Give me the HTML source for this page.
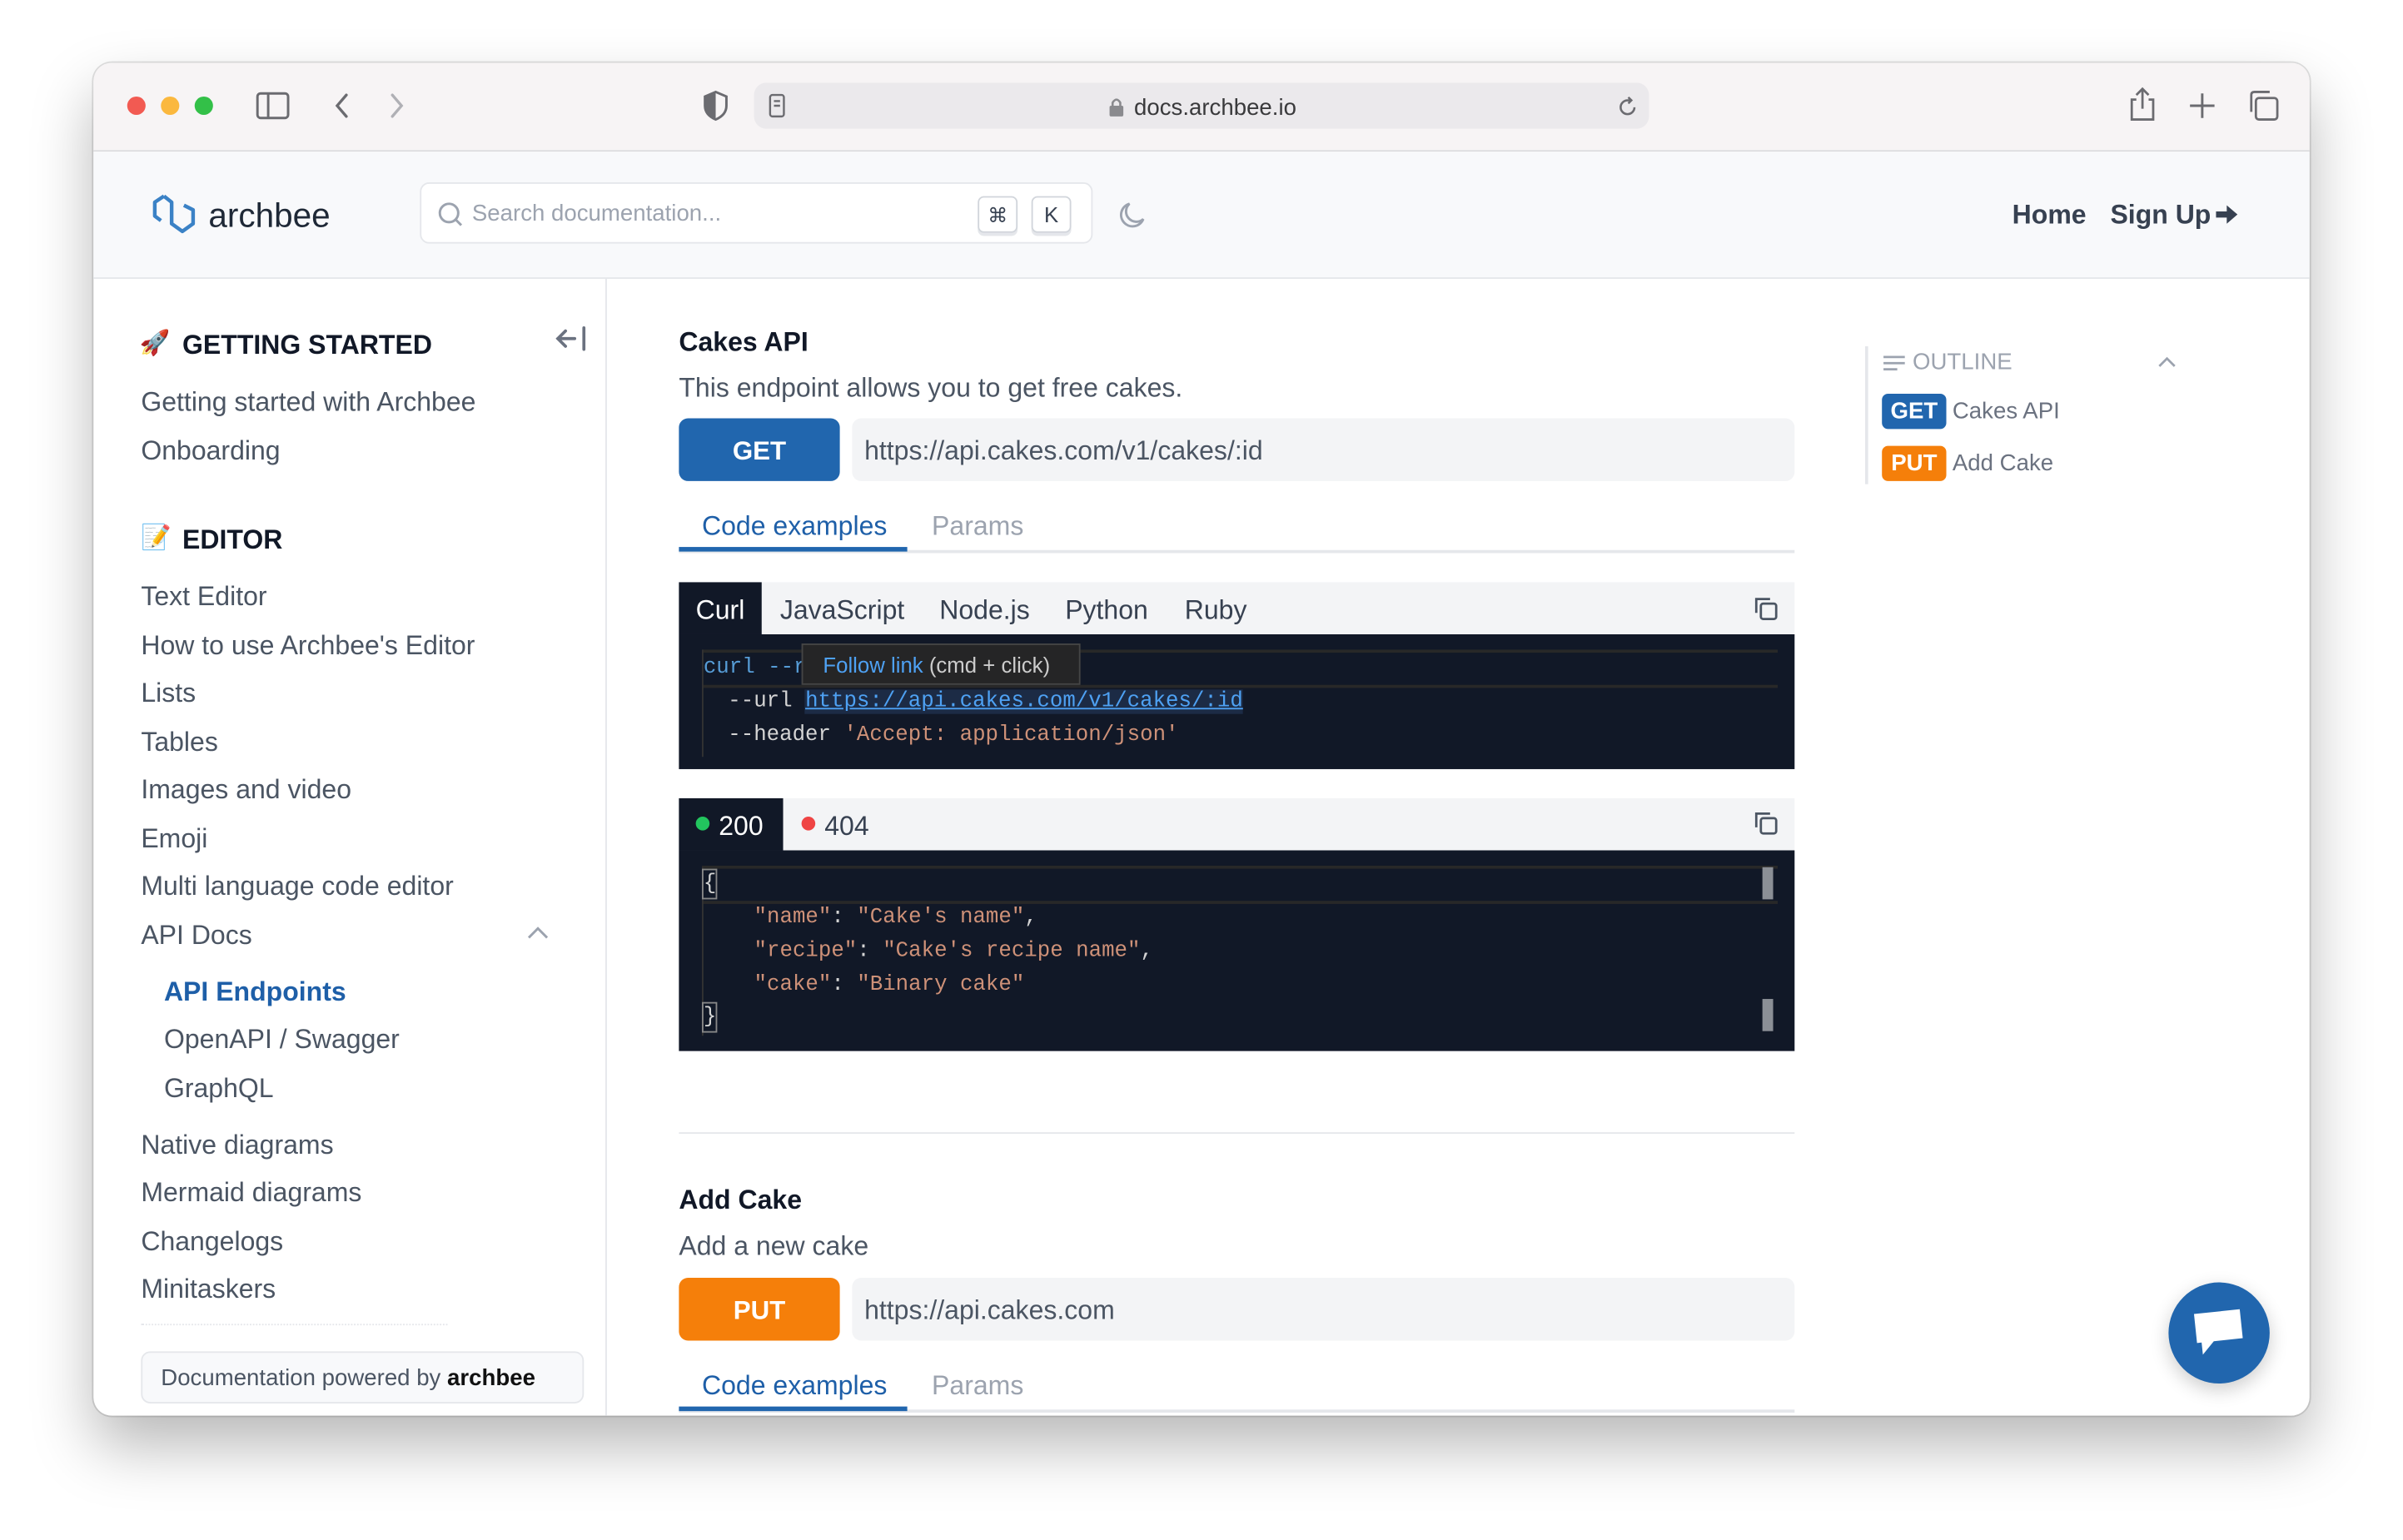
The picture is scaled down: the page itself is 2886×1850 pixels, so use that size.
<!DOCTYPE html>
<html><head><meta charset="utf-8">
<style>
html,body{margin:0;padding:0;background:#fff;width:2886px;height:1850px;overflow:hidden}
#s{position:absolute;left:0;top:0;width:1568px;height:1005px;transform:scale(1.84056);transform-origin:0 0;font-family:"Liberation Sans",sans-serif;color:#4b5563}
.a{position:absolute;white-space:nowrap}
#win{position:absolute;left:61px;top:41px;width:1446px;height:883px;border-radius:12px;background:#fff;overflow:hidden;box-shadow:0 20px 40px rgba(0,0,0,.28),0 0 0 1px rgba(0,0,0,.12)}
.t{font-size:17.4px;line-height:22px}
.mono{font-family:"Liberation Mono",monospace;font-size:14px;line-height:18px}
.dot{position:absolute;width:12px;height:12px;border-radius:6px;top:63px}
</style></head><body>
<div id="s">
<div id="win"></div>
<div class="a" style="left:61px;top:41px;width:1446px;height:57px;background:#f7f4f5;border-radius:12px 12px 0 0;border-bottom:1px solid #d9d9dc"></div>
<div class="dot" style="left:83px;background:#f25a52"></div>
<div class="dot" style="left:105px;background:#fbb83e"></div>
<div class="dot" style="left:127px;background:#33c048"></div>
<svg class="a" style="left:166px;top:59px" width="24" height="20" fill="none" stroke="#6b6b70" stroke-width="1.6"><rect x="2" y="2" width="20" height="16" rx="2"/><line x1="9" y1="2" x2="9" y2="18"/></svg>
<svg class="a" style="left:213px;top:59px" width="60" height="20" fill="none" stroke-width="1.8" stroke-linecap="round"><path d="M13 3 L7 10 L13 17" stroke="#6b6b70"/><path d="M43 3 L49 10 L43 17" stroke="#b0b0b5"/></svg>
<svg class="a" style="left:458px;top:59px" width="18" height="20"><path d="M9 1 L16 4 L16 10 Q16 16 9 19 Q2 16 2 10 L2 4 Z" fill="none" stroke="#6b6b70" stroke-width="1.6"/><path d="M9 1 L9 19 Q2 16 2 10 L2 4 Z" fill="#6b6b70"/></svg>
<div class="a" style="left:492px;top:54px;width:584px;height:30px;background:#ebe9ec;border-radius:8px"></div>
<svg class="a" style="left:501px;top:61px" width="12" height="16" fill="none" stroke="#6b6b70" stroke-width="1.3"><rect x="1.5" y="1" width="9" height="14" rx="1.5"/><line x1="4" y1="5" x2="8" y2="5"/><line x1="4" y1="8" x2="8" y2="8"/></svg>
<svg class="a" style="left:723px;top:63px" width="11" height="14"><rect x="1" y="6" width="9" height="7" rx="1" fill="#8a8a8e"/><path d="M3 6 V4 Q5.5 0 8 4 V6" fill="none" stroke="#8a8a8e" stroke-width="1.4"/></svg>
<div class="a" style="left:740px;top:62px;font-size:15px;color:#3a3a3c">docs.archbee.io</div>
<svg class="a" style="left:1054px;top:62px" width="16" height="16" fill="none" stroke="#6b6b70" stroke-width="1.4"><path d="M12.5 8 A4.5 4.5 0 1 1 8 3.5 L10 3.5"/><path d="M8.5 1.5 L10.5 3.5 L8.5 5.5"/></svg>
<svg class="a" style="left:1388px;top:56px" width="20" height="24" fill="none" stroke="#6b6b70" stroke-width="1.5"><path d="M6 9 H3 V22 H17 V9 H14"/><path d="M10 15 V2 M6 6 L10 2 L14 6"/></svg>
<svg class="a" style="left:1427px;top:59px" width="20" height="20" stroke="#6b6b70" stroke-width="1.6"><path d="M10 2 V18 M2 10 H18"/></svg>
<svg class="a" style="left:1466px;top:58px" width="22" height="22" fill="none" stroke="#6b6b70" stroke-width="1.5"><rect x="6" y="6" width="14" height="14" rx="2"/><path d="M3 15 V4 Q3 2 5 2 H15"/></svg>
<div class="a" style="left:61px;top:99px;width:1446px;height:82px;background:#f8f9fb;border-bottom:1px solid #e5e7eb"></div>
<svg class="a" style="left:99px;top:126px" width="32" height="28" fill="none" stroke="#3b82c6" stroke-width="2.4" stroke-linejoin="round"><path d="M8 2 L2 6 V15 L6 18"/><path d="M8 2 L13 6 V20 L20 25 L27 20 V11 L21 8"/></svg>
<div class="a" style="left:136px;top:128px;font-size:22px;color:#1f2937">archbee</div>
<div class="a" style="left:274px;top:119px;width:439px;height:40px;background:#fff;border:1px solid #e5e7eb;border-radius:6px;box-sizing:border-box"></div>
<svg class="a" style="left:285px;top:131px" width="18" height="18" fill="none" stroke="#9ca3af" stroke-width="1.6"><circle cx="8" cy="8" r="6"/><path d="M12.5 12.5 L16 16"/></svg>
<div class="a" style="left:308px;top:131px;font-size:15px;color:#9ca3af">Search documentation...</div>
<div class="a" style="left:638px;top:128px;width:26px;height:24px;border:1px solid #d1d5db;border-radius:4px;box-shadow:0 2px 0 #e5e7eb;font-size:13px;text-align:center;line-height:24px;color:#374151;box-sizing:border-box">⌘</div>
<div class="a" style="left:673px;top:128px;width:26px;height:24px;border:1px solid #d1d5db;border-radius:4px;box-shadow:0 2px 0 #e5e7eb;font-size:14px;text-align:center;line-height:22px;color:#374151;box-sizing:border-box">K</div>
<svg class="a" style="left:730px;top:131px" width="18" height="18" fill="none" stroke="#9ca3af" stroke-width="1.6"><path d="M7 2 A7.5 7.5 0 1 0 16 12 A6 6 0 0 1 7 2 Z"/></svg>
<div class="a" style="left:1313px;top:130px;font-size:17.4px;font-weight:bold;color:#374151">Home</div>
<div class="a" style="left:1377px;top:130px;font-size:17.4px;font-weight:bold;color:#374151">Sign Up</div>
<svg class="a" style="left:1445px;top:133px" width="16" height="14"><path d="M1 5 H8 V1 L15 7 L8 13 V9 H1 Z" fill="#374151"/></svg>
<div class="a" style="left:395px;top:182px;width:1px;height:742px;background:#e5e7eb"></div>
<div class="a t" style="left:91px;top:214px;font-size:16px">🚀</div>
<div class="a t" style="left:119px;top:214px;font-weight:bold;color:#111827">GETTING STARTED</div>
<svg class="a" style="left:362px;top:212px" width="22" height="18" fill="none" stroke="#6b7280" stroke-width="2" stroke-linecap="round"><path d="M2 9 H13 M7 4 L2 9 L7 14 M19 2 V16"/></svg>
<div class="a t" style="left:92px;top:251px">Getting started with Archbee</div>
<div class="a t" style="left:92px;top:283px">Onboarding</div>
<div class="a t" style="left:92px;top:341px;font-size:16px">📝</div>
<div class="a t" style="left:119px;top:341px;font-weight:bold;color:#111827">EDITOR</div>
<div class="a t" style="left:92px;top:378px">Text Editor</div>
<div class="a t" style="left:92px;top:410px">How to use Archbee's Editor</div>
<div class="a t" style="left:92px;top:441px">Lists</div>
<div class="a t" style="left:92px;top:473px">Tables</div>
<div class="a t" style="left:92px;top:504px">Images and video</div>
<div class="a t" style="left:92px;top:536px">Emoji</div>
<div class="a t" style="left:92px;top:567px">Multi language code editor</div>
<div class="a t" style="left:92px;top:599px">API Docs</div>
<svg class="a" style="left:343px;top:604px" width="16" height="10" fill="none" stroke="#9ca3af" stroke-width="1.6"><path d="M2 8 L8 2 L14 8"/></svg>
<div class="a t" style="left:107px;top:636px;color:#1e5fa8;font-weight:bold">API Endpoints</div>
<div class="a t" style="left:107px;top:667px">OpenAPI / Swagger</div>
<div class="a t" style="left:107px;top:699px">GraphQL</div>
<div class="a t" style="left:92px;top:736px">Native diagrams</div>
<div class="a t" style="left:92px;top:767px">Mermaid diagrams</div>
<div class="a t" style="left:92px;top:799px">Changelogs</div>
<div class="a t" style="left:92px;top:830px">Minitaskers</div>
<div class="a" style="left:92px;top:864px;width:200px;height:1px;border-top:1px dotted #e5e7eb"></div>
<div class="a" style="left:92px;top:882px;width:289px;height:34px;background:#f8f9fb;border:1px solid #e5e7eb;border-radius:6px;box-sizing:border-box;font-size:15px;line-height:34px;padding-left:12px;color:#4b5563">Documentation powered by <b style="color:#111">archbee</b></div>
<div class="a t" style="left:443px;top:212px;font-weight:bold;color:#111827">Cakes API</div>
<div class="a t" style="left:443px;top:242px">This endpoint allows you to get free cakes.</div>
<div class="a" style="left:443px;top:273px;width:105px;height:41px;background:#2166ae;border-radius:6px;color:#fff;font-size:17px;font-weight:bold;text-align:center;line-height:43px">GET</div>
<div class="a" style="left:556px;top:273px;width:615px;height:41px;background:#f3f4f6;border-radius:6px;font-size:17.4px;line-height:43px;padding-left:8px;box-sizing:border-box">https://api.cakes.com/v1/cakes/:id</div>
<div class="a t" style="left:458px;top:332px;color:#1e5fa8">Code examples</div>
<div class="a t" style="left:608px;top:332px;color:#9ca3af">Params</div>
<div class="a" style="left:443px;top:359px;width:728px;height:2px;background:#e5e7eb"></div>
<div class="a" style="left:443px;top:357px;width:149px;height:3px;background:#2166ae"></div>
<div class="a" style="left:443px;top:380px;width:728px;height:34px;background:#f3f4f6"></div>
<div class="a" style="left:443px;top:380px;width:54px;height:34px;background:#111827"></div>
<div class="a t" style="left:454px;top:387px;color:#fff">Curl</div>
<div class="a t" style="left:509px;top:387px;color:#374151">JavaScript</div>
<div class="a t" style="left:613px;top:387px;color:#374151">Node.js</div>
<div class="a t" style="left:695px;top:387px;color:#374151">Python</div>
<div class="a t" style="left:773px;top:387px;color:#374151">Ruby</div>
<svg class="a" style="left:1143px;top:388px" width="18" height="18" fill="none" stroke="#4b5563" stroke-width="1.5"><rect x="6" y="6" width="10" height="10" rx="1.5"/><path d="M3 12 V3 H12"/></svg>
<div class="a" style="left:443px;top:414px;width:728px;height:88px;background:#111827"></div>
<div class="a" style="left:458px;top:424px;width:702px;height:21px;border-top:2px solid #282828;border-bottom:2px solid #282828"></div>
<div class="a" style="left:458px;top:424px;width:1px;height:70px;background:#333"></div>
<div class="a mono" style="left:459px;top:427px;color:#569cd6">curl --r</div>
<div class="a mono" style="left:475px;top:449px;color:#d4d4d4">--url <span style="color:#4ea1f3;text-decoration:underline;background:#1c2b45">https://api.cakes.com/v1/cakes/:id</span></div>
<div class="a mono" style="left:475px;top:471px;color:#d4d4d4">--header <span style="color:#ce9178">'Accept: application/json'</span></div>
<div class="a" style="left:523px;top:420px;width:182px;height:27px;background:#252526;border:1px solid #454545;box-sizing:border-box;font-size:14px;line-height:26px;padding-left:13px;color:#ccc"><span style="color:#4ea1f3">Follow link</span> (cmd + click)</div>
<div class="a" style="left:443px;top:521px;width:728px;height:34px;background:#f3f4f6"></div>
<div class="a" style="left:443px;top:521px;width:68px;height:34px;background:#111827"></div>
<div class="a" style="left:454px;top:533px;width:9px;height:9px;border-radius:5px;background:#22c55e"></div>
<div class="a t" style="left:469px;top:528px;color:#fff">200</div>
<div class="a" style="left:523px;top:533px;width:9px;height:9px;border-radius:5px;background:#ef4444"></div>
<div class="a t" style="left:538px;top:528px;color:#374151">404</div>
<svg class="a" style="left:1143px;top:528px" width="18" height="18" fill="none" stroke="#4b5563" stroke-width="1.5"><rect x="6" y="6" width="10" height="10" rx="1.5"/><path d="M3 12 V3 H12"/></svg>
<div class="a" style="left:443px;top:555px;width:728px;height:131px;background:#111827"></div>
<div class="a" style="left:458px;top:565px;width:702px;height:21px;border-top:2px solid #282828;border-bottom:2px solid #282828"></div>
<div class="a" style="left:458px;top:566px;width:1px;height:110px;background:#333"></div>
<div class="a" style="left:1150px;top:566px;width:7px;height:21px;background:#8b8f96"></div>
<div class="a" style="left:1150px;top:652px;width:7px;height:21px;background:#8b8f96"></div>
<div class="a mono" style="left:459px;top:568px;color:#d4d4d4;outline:1px solid #888">{</div>
<div class="a mono" style="left:492px;top:590px;color:#ce9178">"name"<span style="color:#d4d4d4">:</span> "Cake's name"<span style="color:#d4d4d4">,</span></div>
<div class="a mono" style="left:492px;top:612px;color:#ce9178">"recipe"<span style="color:#d4d4d4">:</span> "Cake's recipe name"<span style="color:#d4d4d4">,</span></div>
<div class="a mono" style="left:492px;top:634px;color:#ce9178">"cake"<span style="color:#d4d4d4">:</span> "Binary cake"</div>
<div class="a mono" style="left:459px;top:655px;color:#d4d4d4;outline:1px solid #888">}</div>
<div class="a" style="left:443px;top:739px;width:728px;height:1px;background:#e5e7eb"></div>
<div class="a t" style="left:443px;top:772px;font-weight:bold;color:#111827">Add Cake</div>
<div class="a t" style="left:443px;top:802px">Add a new cake</div>
<div class="a" style="left:443px;top:834px;width:105px;height:41px;background:#f57f0a;border-radius:6px;color:#fff;font-size:17px;font-weight:bold;text-align:center;line-height:43px">PUT</div>
<div class="a" style="left:556px;top:834px;width:615px;height:41px;background:#f3f4f6;border-radius:6px;font-size:17.4px;line-height:43px;padding-left:8px;box-sizing:border-box">https://api.cakes.com</div>
<div class="a t" style="left:458px;top:893px;color:#1e5fa8">Code examples</div>
<div class="a t" style="left:608px;top:893px;color:#9ca3af">Params</div>
<div class="a" style="left:443px;top:920px;width:728px;height:2px;background:#e5e7eb"></div>
<div class="a" style="left:443px;top:918px;width:149px;height:3px;background:#2166ae"></div>
<div class="a" style="left:1217px;top:226px;width:2px;height:90px;background:#e5e7eb"></div>
<svg class="a" style="left:1229px;top:231px" width="14" height="12" stroke="#9ca3af" stroke-width="1.5"><path d="M0 2 H14 M0 6 H14 M0 10 H9"/></svg>
<div class="a" style="left:1248px;top:228px;font-size:15px;color:#9ca3af">OUTLINE</div>
<svg class="a" style="left:1408px;top:232px" width="12" height="8" fill="none" stroke="#9ca3af" stroke-width="1.5"><path d="M1 7 L6 2 L11 7"/></svg>
<div class="a" style="left:1228px;top:257px;width:42px;height:23px;background:#2166ae;border-radius:4px;color:#fff;font-size:15px;font-weight:bold;text-align:center;line-height:24px">GET</div>
<div class="a" style="left:1274px;top:260px;font-size:15px;color:#6b7280">Cakes API</div>
<div class="a" style="left:1228px;top:291px;width:42px;height:23px;background:#f57f0a;border-radius:4px;color:#fff;font-size:15px;font-weight:bold;text-align:center;line-height:24px">PUT</div>
<div class="a" style="left:1274px;top:294px;font-size:15px;color:#6b7280">Add Cake</div>
<div class="a" style="left:1415px;top:837px;width:66px;height:66px;border-radius:33px;background:#2166ae;box-shadow:0 4px 12px rgba(0,0,0,.2)"></div>
<svg class="a" style="left:1430px;top:853px" width="36" height="34"><path d="M3 3 H33 V22 H14 L6 30 V22 H3 Z" fill="#fff" transform="rotate(-6 18 17)"/></svg>
</div>
</body></html>
